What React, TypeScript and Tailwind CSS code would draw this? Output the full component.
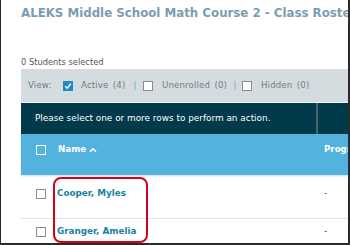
import React from "react";

const FONT = "font-['DejaVu_Sans','Verdana',sans-serif]";

function Box({ checked = false, tone = "gray" }: { checked?: boolean; tone?: "gray" | "white" }) {
  if (checked) {
    return (
      <span className="flex h-[10px] w-[10px] shrink-0 items-center justify-center bg-[#1f8ac4]">
        <svg width="8" height="8" viewBox="0 0 8 8">
          <polyline points="1.2,4.2 3.2,6.2 6.8,1.6" fill="none" stroke="#ffffff" strokeWidth="1.4" />
        </svg>
      </span>
    );
  }
  return (
    <span
      className={
        tone === "white"
          ? "block h-[10px] w-[10px] shrink-0 border border-white"
          : "block h-[10px] w-[10px] shrink-0 border border-[#8c8c8c] bg-white"
      }
    />
  );
}

const students = [
  { name: "Cooper, Myles", pad: "pt-[13px] h-[44px]" },
  { name: "Granger, Amelia", pad: "pt-[7px] h-[26px]" },
];

export default function App() {
  return (
    <div
      className={`relative h-[245px] w-[350px] overflow-hidden border-b-2 border-l border-r-2 border-[#2a2a2a] bg-white ${FONT}`}
    >
      <div className="flex flex-col pl-[20px]">
        <div className="flex h-[28px] items-center whitespace-nowrap text-[11.8px] font-bold text-[#7c9db1]">
          ALEKS Middle School Math Course 2 - Class Roster
        </div>

        <div className="mt-[27px] flex h-[14px] items-center text-[8.3px] text-[#555555]">0 Students selected</div>

        <div className="flex h-[34px] items-center whitespace-nowrap border-b border-[#eef2f3] bg-[#d5dcdf] pl-[7px] text-[8.6px] tracking-[0.15px] text-[#6e7c83] [word-spacing:1.5px]">
          <span className="w-[35px] shrink-0">View:</span>
          <Box checked />
          <span className="ml-[8px] w-[50px] shrink-0">Active (4)</span>
          <span className="w-[8px] shrink-0 text-center text-[#5cb2da]">|</span>
          <span className="ml-[4px]">
            <Box />
          </span>
          <span className="ml-[9px] w-[69px] shrink-0">Unenrolled (0)</span>
          <span className="w-[8px] shrink-0 text-center text-[#5cb2da]">|</span>
          <span className="ml-[3px]">
            <Box />
          </span>
          <span className="ml-[9px]">Hidden (0)</span>
        </div>

        <div className="flex h-[31px] bg-[#003a4b]">
          <div className="flex w-[295px] shrink-0 items-center whitespace-nowrap pl-[14px] text-[8.9px] text-white">
            Please select one or more rows to perform an action.
          </div>
          <div className="w-[2px] bg-[#4b6470]" />
        </div>

        <div className="h-[41px] bg-[#53b3de] shadow-[0_1px_2px_rgba(0,0,0,0.15)]">
          <div className="flex h-[32px] items-center whitespace-nowrap text-[8.7px] font-bold text-white">
            <span className="ml-[15px]">
              <Box tone="white" />
            </span>
            <span className="ml-[12px] flex w-[266px] shrink-0 items-center gap-[3px]">
              Name
              <svg width="8" height="6" viewBox="0 0 8 6">
                <polyline points="1,4.8 4,1.8 7,4.8" fill="none" stroke="#ffffff" strokeWidth="1.6" />
              </svg>
            </span>
            <span>Progress</span>
          </div>
        </div>

        {students.map((s, i) => (
          <div
            key={s.name}
            className={`${s.pad} ${i === 0 ? "border-b border-[#d3e7ef]" : ""} flex items-start whitespace-nowrap`}
          >
            <div className="flex h-[12px] items-center">
              <span className="ml-[15px]">
                <Box />
              </span>
              <span className="ml-[11px] w-[267px] shrink-0 text-[8.8px] font-bold text-[#1a7fa3]">{s.name}</span>
              <span className="text-[8.8px] text-[#444444]">-</span>
            </div>
          </div>
        ))}
      </div>

      <div className="absolute left-[52px] top-[177px] h-[66px] w-[95px] rounded-[8px] border-2 border-[#d7001c]" />
    </div>
  );
}
